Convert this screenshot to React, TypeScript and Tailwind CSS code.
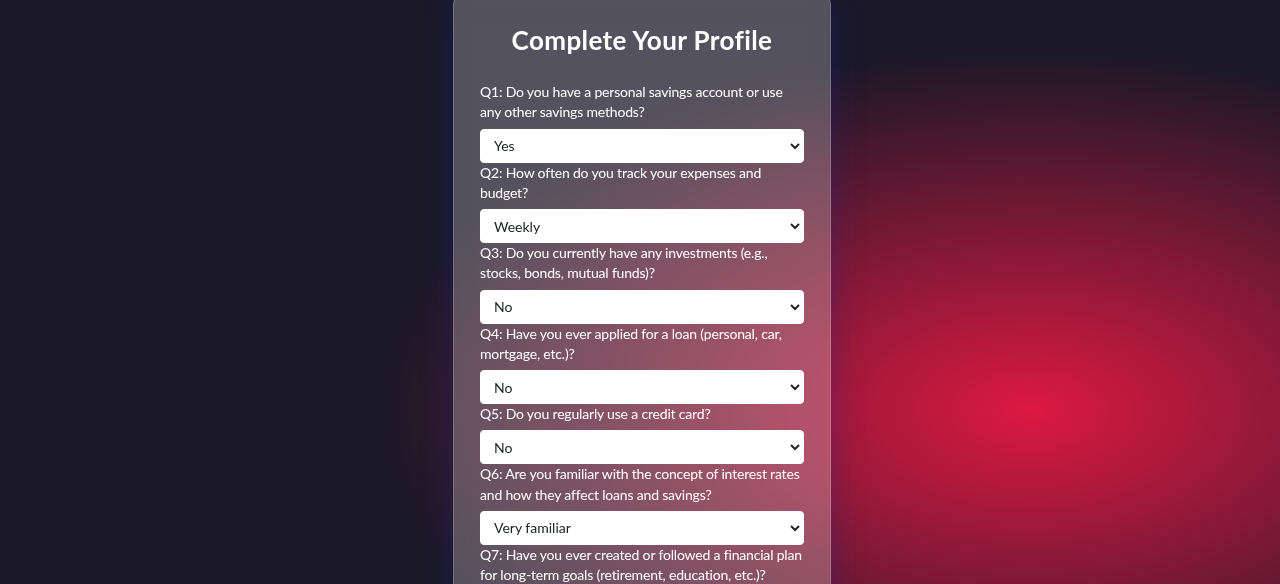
import { useState } from "react";

const questions = [
  {
    q: "Q1: Do you have a personal savings account or use any other savings methods?",
    options: ["Yes", "No"],
    value: "Yes",
  },
  {
    q: "Q2: How often do you track your expenses and budget?",
    options: ["Daily", "Weekly", "Monthly", "Rarely", "Never"],
    value: "Weekly",
  },
  {
    q: "Q3: Do you currently have any investments (e.g., stocks, bonds, mutual funds)?",
    options: ["Yes", "No"],
    value: "No",
  },
  {
    q: "Q4: Have you ever applied for a loan (personal, car, mortgage, etc.)?",
    options: ["Yes", "No"],
    value: "No",
  },
  {
    q: "Q5: Do you regularly use a credit card?",
    options: ["Yes", "No"],
    value: "No",
  },
  {
    q: "Q6: Are you familiar with the concept of interest rates and how they affect loans and savings?",
    options: ["Very familiar", "Somewhat familiar", "Not familiar"],
    value: "Very familiar",
  },
  {
    q: "Q7: Have you ever created or followed a financial plan for long-term goals (retirement, education, etc.)?",
    options: ["Yes", "No"],
    value: "No",
  },
];

export default function App() {
  const [answers, setAnswers] = useState<string[]>(questions.map((x) => x.value));

  return (
    <div
      className="h-[584px] overflow-hidden bg-[#1b1828] bg-[radial-gradient(ellipse_650px_360px_at_1030px_410px,#dc1942_0%,#1b1828_100%)] flex justify-center pl-[4px]"
      style={{ fontFamily: '"Segoe UI", Lato, "Liberation Sans", sans-serif' }}
    >
      <div className="w-[378px] shrink-0 self-start -mt-[6px] rounded-[10px] border border-white/20 bg-white/25 backdrop-blur-[10px] shadow-[0_8px_32px_0_rgba(31,38,135,0.37)] px-[26px] pt-[28px] pb-8">
        <h2 className="text-center text-[26px] tracking-[0.4px] leading-[34px] font-bold text-white mb-[25px]">
          Complete Your Profile
        </h2>

        <form>
          {questions.map((item, i) => (
            <div key={i}>
              <label className="block text-[14px] tracking-[-0.18px] leading-[20.25px] text-white mb-[6px]">
                {item.q}
              </label>
              <select
                className="w-full h-[34px] rounded-[4px] bg-white border border-white px-[9px] text-[14px] text-[#212529]"
                value={answers[i]}
                onChange={(e) => {
                  const next = [...answers];
                  next[i] = e.target.value;
                  setAnswers(next);
                }}
              >
                {item.options.map((o) => (
                  <option key={o} value={o}>
                    {o}
                  </option>
                ))}
              </select>
            </div>
          ))}

          <button
            type="button"
            className="mt-5 w-full h-[40px] rounded-[4px] bg-[#dc1942] text-white text-[15px] font-semibold"
          >
            Submit
          </button>
        </form>
      </div>
    </div>
  );
}
